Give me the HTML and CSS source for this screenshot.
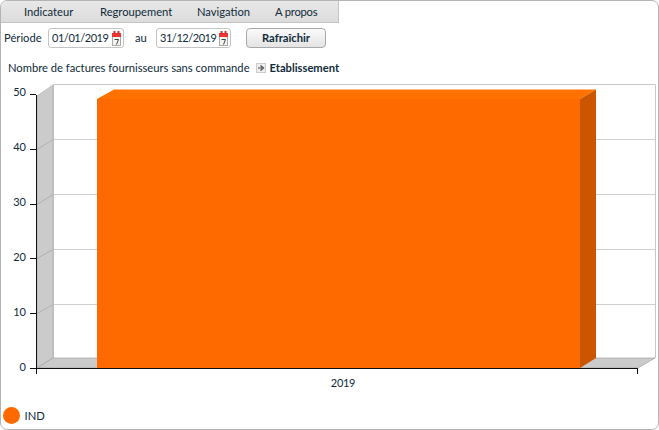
FILE: index.html
```html
<!DOCTYPE html>
<html lang="fr">
<head>
<meta charset="utf-8">
<title>Factures</title>
<link rel="stylesheet" href="styles.css">
</head>
<body>
<div class="panel">
  <nav class="menu">
    <span class="menu-item mi1">Indicateur</span>
    <span class="menu-item mi2">Regroupement</span>
    <span class="menu-item mi3">Navigation</span>
    <span class="menu-item mi4">A propos</span>
  </nav>
  <div class="filters">
    <label class="lbl">Période</label>
    <div class="date">
      <span>01/01/2019</span>
      <svg class="cal" width="9" height="15" viewBox="0 0 9 15"><rect x="0.5" y="3.5" width="8" height="11" fill="#f4f4f0" stroke="#aaa"/><rect x="0" y="2" width="9" height="4" fill="#e33"/><rect x="1.5" y="0" width="2" height="3" fill="#c33"/><rect x="5.5" y="0" width="2" height="3" fill="#c33"/><path d="M2.5 8.5h4l-2 5" fill="none" stroke="#444"/></svg>
    </div>
    <label class="lbl au">au</label>
    <div class="date date2">
      <span>31/12/2019</span>
      <svg class="cal" width="9" height="15" viewBox="0 0 9 15"><rect x="0.5" y="3.5" width="8" height="11" fill="#f4f4f0" stroke="#aaa"/><rect x="0" y="2" width="9" height="4" fill="#e33"/><rect x="1.5" y="0" width="2" height="3" fill="#c33"/><rect x="5.5" y="0" width="2" height="3" fill="#c33"/><path d="M2.5 8.5h4l-2 5" fill="none" stroke="#444"/></svg>
    </div>
    <button class="refresh">Rafraîchir</button>
  </div>
  <div class="title-row">
    <span>Nombre de factures fournisseurs sans commande</span>
    <svg class="arrow" width="10" height="10" viewBox="0 0 10 10"><rect x="0.5" y="0.5" width="9" height="9" fill="#eee" stroke="#ccc"/><path d="M2 5h4M4.5 2.5L7.5 5L4.5 7.5" fill="none" stroke="#444" stroke-width="1.2"/></svg>
    <strong>Etablissement</strong>
  </div>
  <svg class="chart" width="657" height="348" viewBox="0 0 657 348">
    <g transform="translate(-1,-80)">
      <rect x="53" y="84" width="602" height="274" fill="#fff"/>
      <path d="M53.5 358V84.5H655.5V358" fill="none" stroke="#c8c8c8"/>
      <path d="M53 139.5H655M53 194.5H655M53 249.5H655M53 304.5H655" stroke="#cfcfcf"/>
      <polygon points="37,96 53,85 53,358 37,368" fill="#cbcbcb" stroke="#aaa" stroke-width="0.6"/>
      <path d="M37 149.5L53 139.5M37 204.5L53 194.5M37 258.5L53 249.5M37 313.5L53 304.5" fill="none" stroke="#aaa" stroke-width="0.8"/>
      <polygon points="37,368 53,358 655,358 638,368" fill="#cbcbcb" stroke="#999" stroke-width="0.6"/>
      <polygon points="97,99 114,89.5 596,89.5 580,99" fill="#ff7200"/>
      <polygon points="580,99 596,89.5 596,358 580,368" fill="#cc5500"/>
      <rect x="97" y="99" width="483" height="269" fill="#ff6a00"/>
      <path d="M36.5 95V374M30 94.5H36M30 149.5H36M30 204.5H36M30 258.5H36M30 313.5H36M30 368.5H638M637.5 368V374" fill="none" stroke="#111"/>
      <g class="tick">
        <text x="25.5" y="96" text-anchor="end">50</text>
        <text x="25.5" y="151" text-anchor="end">40</text>
        <text x="25.5" y="206" text-anchor="end">30</text>
        <text x="25.5" y="261" text-anchor="end">20</text>
        <text x="25.5" y="316" text-anchor="end">10</text>
        <text x="25.5" y="371" text-anchor="end">0</text>
        <text x="343" y="387" text-anchor="middle">2019</text>
      </g>
    </g>
  </svg>
  <div class="legend">
    <span class="dot"></span>
    <span>IND</span>
  </div>
</div>
</body>
</html>
```
FILE: styles.css
```css
* { box-sizing: border-box; }
html, body { margin: 0; padding: 0; background: #fff; }
body {
  width: 659px;
  height: 430px;
  overflow: hidden;
  font-family: "Lato", "Open Sans", sans-serif;
  font-size: 11.2px;
  color: #0f2a3a;
}
.panel {
  width: 659px;
  height: 430px;
  border: 1px solid #b4b4b4;
  border-radius: 7px;
  display: flex;
  flex-direction: column;
  overflow: hidden;
}
.menu {
  width: 338px;
  height: 22px;
  background: linear-gradient(#e8e8e8, #dcdcdc);
  border-bottom: 1px solid #c4c4c4;
  border-right: 1px solid #c4c4c4;
  display: flex;
  align-items: center;
  padding-left: 23px;
}
.menu-item { white-space: nowrap; }
.mi1 { width: 76px; }
.mi2 { width: 97px; }
.mi3 { width: 78px; }
.mi4 { letter-spacing: -0.2px; }
.filters {
  display: flex;
  align-items: center;
  height: 20px;
  margin-top: 5px;
  padding-left: 3px;
}
.lbl { width: 44px; padding-bottom: 2px; }
.au { width: 32px; padding-left: 11px; }
.date {
  width: 76px;
  height: 20px;
  border: 1px solid #c4c4c4;
  border-radius: 3px;
  background: #fff;
  display: flex;
  align-items: center;
  justify-content: space-between;
  padding: 0 2px 0 3px;
  font-size: 11px;
  letter-spacing: -0.45px;
}
.date span { padding-bottom: 1px; }
.date2 { width: 75px; }
.cal { flex: none; }
.refresh {
  margin-left: 15px;
  width: 80px;
  height: 20px;
  padding: 0 0 2px;
  border: 1px solid #a8a8a8;
  border-radius: 4px;
  background: linear-gradient(#fafafa, #e4e4e4);
  font: bold 11.2px "Lato", sans-serif;
  color: #0f2a3a;
}
.title-row {
  display: flex;
  align-items: center;
  height: 14px;
  margin-top: 12px;
  padding-left: 7px;
}
.arrow { margin: 2px 4px 0 6px; flex: none; }
.title-row strong { font-weight: 700; }
.chart { display: block; margin-top: 6px; flex: none; }
.tick text { font: 11px "Lato", sans-serif; letter-spacing: -0.3px; fill: #0f2a3a; }
.legend {
  display: flex;
  align-items: center;
  gap: 5px;
  padding-left: 1.5px;
  margin-top: -21px;
  height: 17px;
}
.dot {
  width: 17px;
  height: 17px;
  border-radius: 50%;
  background: #ff6a00;
  flex: none;
}
```
